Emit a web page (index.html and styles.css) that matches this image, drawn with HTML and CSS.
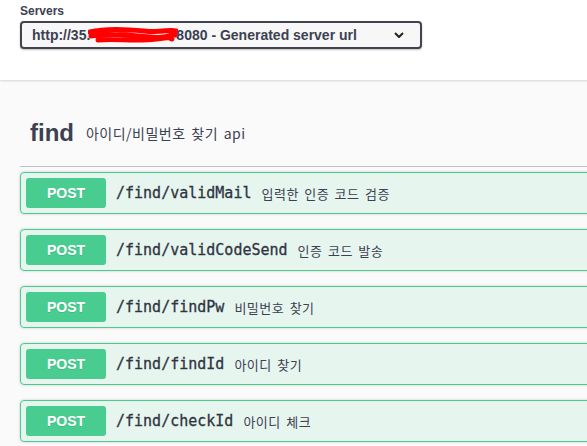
FILE: index.html
```html
<!DOCTYPE html>
<html>
<head>
  <title>Swagger UI</title>
  <link rel="stylesheet" href="styles.css">
</head>
<body>
  <div class="scheme-container">
    <div class="servers">
      <div class="servers-title">Servers</div>
      <div class="select">
        <span>http://35.</span><svg class="redact" width="90" height="20" viewBox="0 0 90 20"><path d="M2 7 C18 3 36 4 56 6 S80 4 88 6 M3 11 C22 8 42 10 62 12 S80 9 88 10 M10 15 C28 13 46 17 68 14 S80 13 84 14" stroke="#ff0000" stroke-width="5" fill="none" stroke-linecap="round"/></svg><span>8080 - Generated server url</span>
        <svg class="chevron" width="10" height="6" viewBox="0 0 10 6"><path d="M1 1 L5 5 L9 1" stroke="#222" stroke-width="2" fill="none"/></svg>
      </div>
    </div>
  </div>

  <div class="wrapper">
    <div class="tag">
      <span class="tag-name">find</span>
      <small class="tag-desc">아이디/비밀번호 찾기 api</small>
    </div>

    <div class="opblock">
      <span class="method">POST</span>
      <span class="path">/find/validMail</span>
      <span class="desc">입력한 인증 코드 검증</span>
    </div>
    <div class="opblock">
      <span class="method">POST</span>
      <span class="path">/find/validCodeSend</span>
      <span class="desc">인증 코드 발송</span>
    </div>
    <div class="opblock">
      <span class="method">POST</span>
      <span class="path">/find/findPw</span>
      <span class="desc">비밀번호 찾기</span>
    </div>
    <div class="opblock">
      <span class="method">POST</span>
      <span class="path">/find/findId</span>
      <span class="desc">아이디 찾기</span>
    </div>
    <div class="opblock">
      <span class="method">POST</span>
      <span class="path">/find/checkId</span>
      <span class="desc">아이디 체크</span>
    </div>
  </div>
</body>
</html>
```

FILE: styles.css
```css
html,
body {
  margin: 0;
  overflow: hidden;
}

body {
  background: #fafafa;
  color: #3b4151;
  font-family: "Liberation Sans", "Noto Sans CJK KR", sans-serif;
}

.scheme-container {
  width: 1400px;
  height: 80px;
  box-sizing: border-box;
  background: #fff;
  box-shadow: 0 1px 2px 0 rgba(0, 0, 0, .15);
  padding: 3px 20px 0;
}

.servers-title {
  font-size: 12px;
  font-weight: 600;
  line-height: 16px;
  margin-bottom: 2px;
}

.select {
  display: flex;
  align-items: center;
  width: 402px;
  height: 28px;
  box-sizing: border-box;
  border: 2px solid #41444e;
  border-radius: 4px;
  background: #f7f7f7;
  box-shadow: 0 1px 2px 0 rgba(0, 0, 0, .25);
  padding: 0 10px;
  font-size: 14px;
  font-weight: 700;
  color: #3b4151;
  white-space: nowrap;
}

.redact {
  margin: 0 -2px 0 -2px;
}

.chevron {
  margin-left: auto;
  margin-right: 6px;
}

.wrapper {
  width: 1400px;
  padding: 30px 20px 0;
}

.tag {
  display: flex;
  align-items: center;
  height: 36px;
  padding: 5px 20px 15px 10px;
  margin-bottom: 5px;
  border-bottom: 1px solid rgba(59, 65, 81, .3);
}

.tag-name {
  font-size: 24px;
  font-weight: 700;
}

.tag-desc {
  font-size: 14px;
  padding: 0 12px;
  font-family: "Noto Sans CJK KR", sans-serif;
  letter-spacing: .5px;
  word-spacing: 2px;
}

.opblock {
  display: flex;
  align-items: center;
  padding: 5px;
  margin-bottom: 15px;
  border: 1px solid #49cc90;
  border-radius: 4px;
  background: rgba(73, 204, 144, .1);
  box-shadow: 0 0 3px rgba(0, 0, 0, .19);
}

.method {
  min-width: 80px;
  padding: 6px 0;
  line-height: 18px;
  text-align: center;
  border-radius: 3px;
  background: #49cc90;
  color: #fff;
  font-size: 14px;
  font-weight: 700;
  text-shadow: 0 1px 0 rgba(0, 0, 0, .1);
}

.path {
  padding: 0 10px;
  font-family: "DejaVu Sans Mono", monospace;
  font-size: 15px;
  color: #2f3441;
  -webkit-text-stroke: .3px #2f3441;
}

.desc {
  font-size: 13px;
  font-family: "Noto Sans CJK KR", sans-serif;
  color: #3b4151;
  letter-spacing: .5px;
  word-spacing: 2px;
}
```
